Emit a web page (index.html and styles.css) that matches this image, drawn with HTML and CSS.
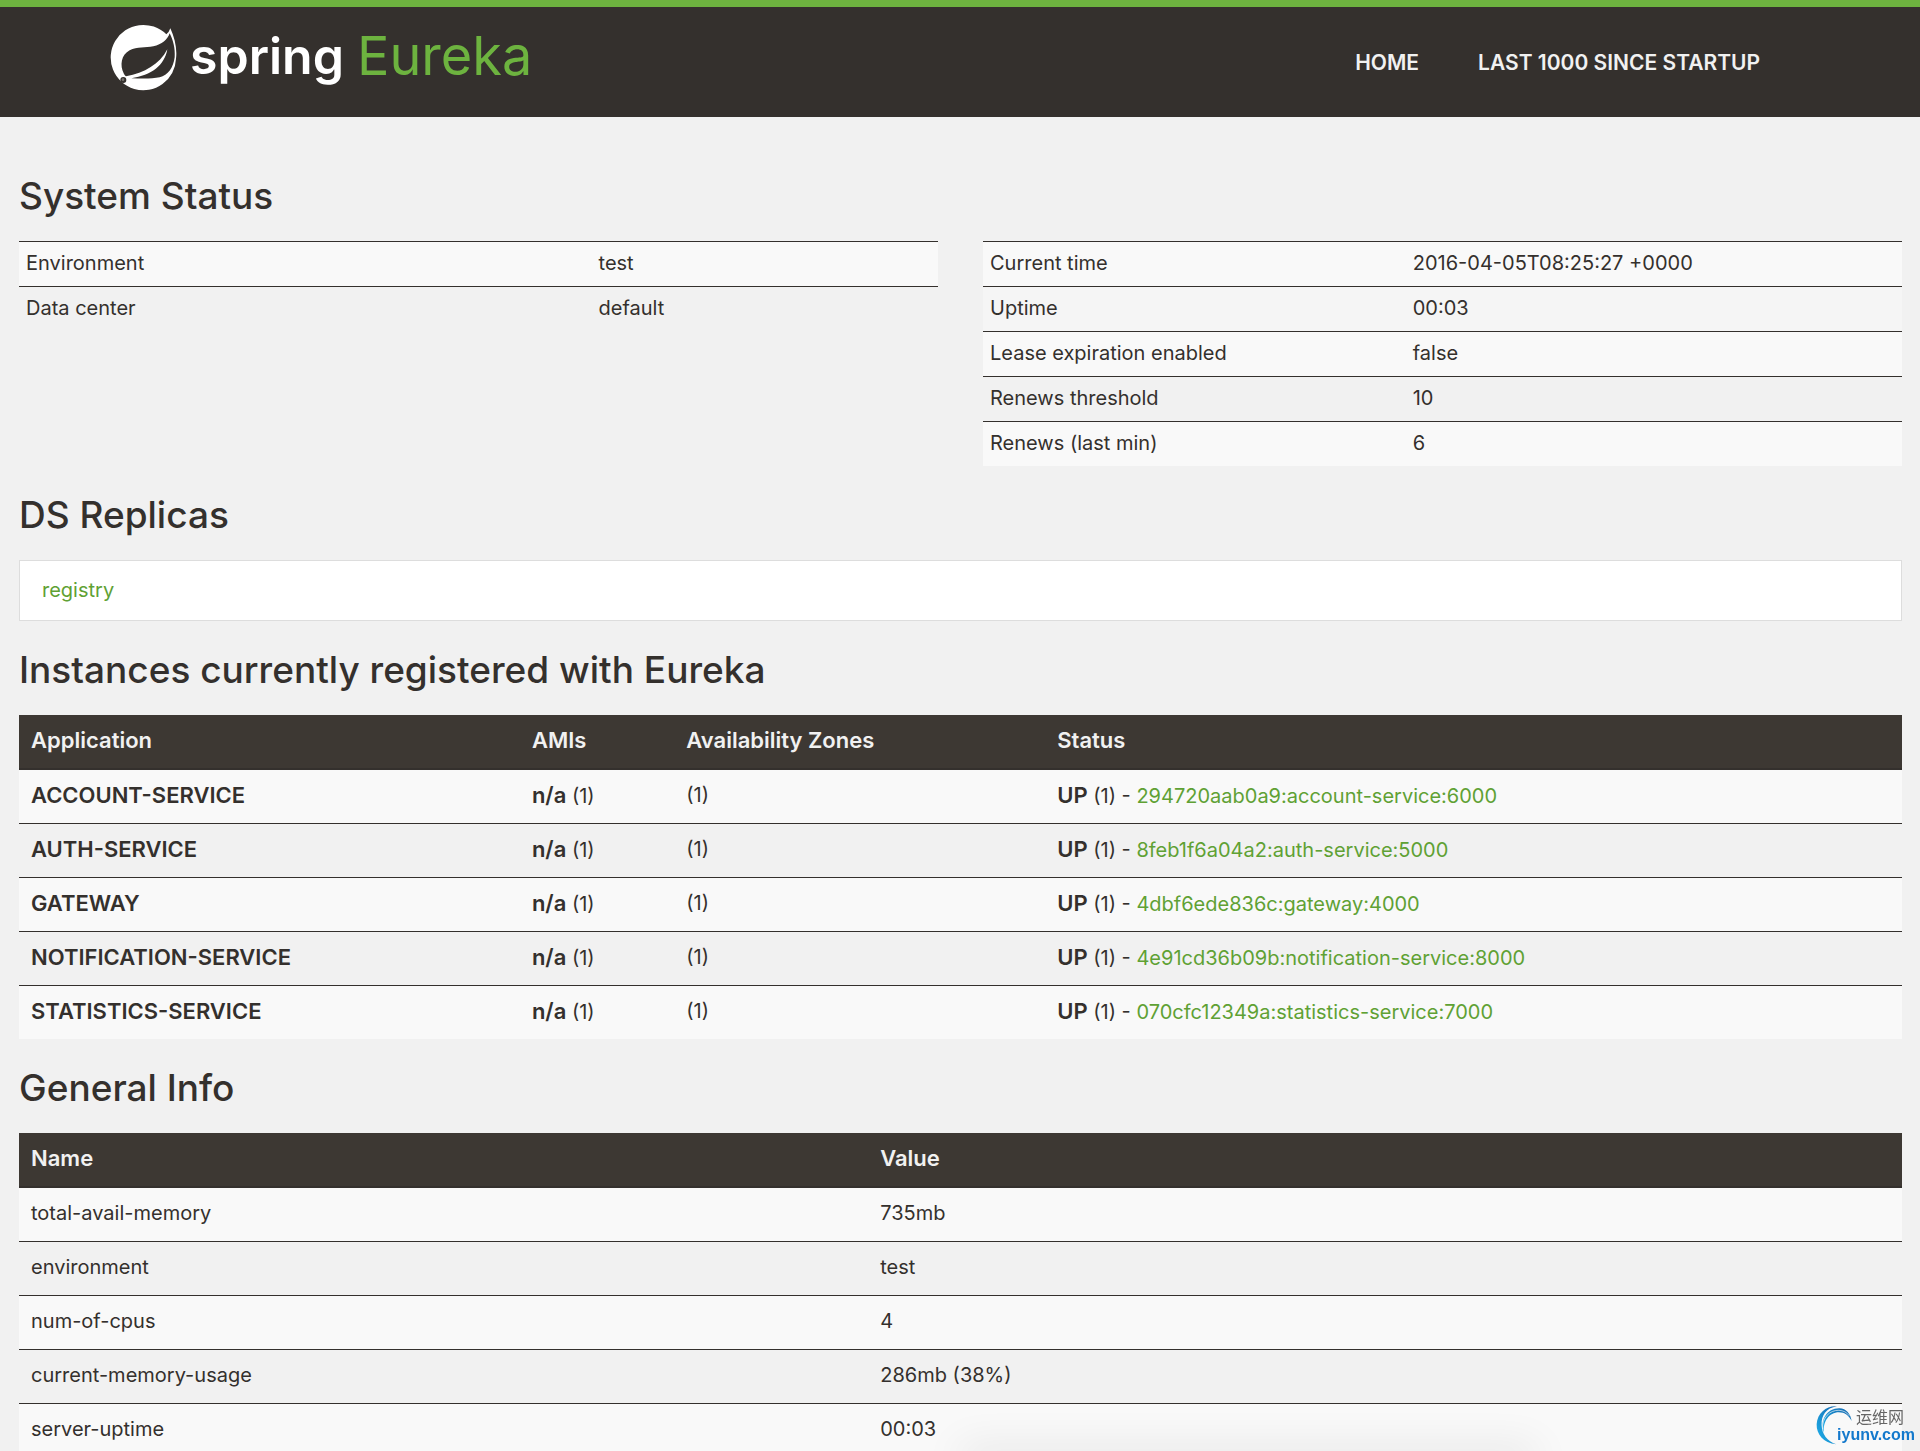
FILE: index.html
```
<!DOCTYPE html>
<html lang="en">
<head>
  <meta charset="UTF-8">
  <title>Eureka</title>
  <link rel="stylesheet" href="styles.css">
</head>
<body>

  <header class="navbar">
    <a class="brand" href="#">
      <svg class="brand-icon" viewBox="0 0 204 204" aria-hidden="true">
        <g transform="translate(-16 -26)">
          <path fill="#fff" d="M185 57A98 98 0 1 0 214 130C218 100 210 68 197 39Q193 51 185 57Z"/>
          <path fill="#34302d" d="M195 54C188 74 172 87 146 93C122 98 98 93 75 105C50 118 44 150 58 176Q61 181 64 183C120 172 164 148 188 102C180 150 140 180 80 189C112 190 142 191 165 186C190 180 206 158 210 126C212 100 206 76 195 54Z"/>
          <circle cx="56" cy="194" r="9" fill="#34302d"/>
          <circle cx="55" cy="193" r="4" fill="#77736f"/>
        </g>
      </svg>
      <span class="brand-spring">spring</span>
      <span class="brand-eureka">Eureka</span>
    </a>
    <nav class="nav-links">
      <a href="#">HOME</a>
      <a href="#lastn">LAST 1000 SINCE STARTUP</a>
    </nav>
  </header>

  <main class="container">
    <h1>System Status</h1>
    <div class="row">
      <table class="status-table status-left">
        <tr><td>Environment</td><td>test</td></tr>
        <tr><td>Data center</td><td>default</td></tr>
      </table>
      <table class="status-table status-right">
        <tr><td>Current time</td><td>2016-04-05T08:25:27 +0000</td></tr>
        <tr class="active"><td>Uptime</td><td>00:03</td></tr>
        <tr><td>Lease expiration enabled</td><td>false</td></tr>
        <tr><td>Renews threshold</td><td>10</td></tr>
        <tr><td>Renews (last min)</td><td>6</td></tr>
      </table>
    </div>

    <h1>DS Replicas</h1>
    <ul class="list-group">
      <li><a href="#">registry</a></li>
    </ul>

    <h1>Instances currently registered with Eureka</h1>
    <table class="data-table instances">
      <thead>
        <tr><th>Application</th><th>AMIs</th><th>Availability Zones</th><th>Status</th></tr>
      </thead>
      <tbody>
        <tr>
          <td><b>ACCOUNT-SERVICE</b></td>
          <td><b>n/a</b> (1)</td>
          <td>(1)</td>
          <td><b>UP</b> (1) - <a href="#">294720aab0a9:account-service:6000</a></td>
        </tr>
        <tr>
          <td><b>AUTH-SERVICE</b></td>
          <td><b>n/a</b> (1)</td>
          <td>(1)</td>
          <td><b>UP</b> (1) - <a href="#">8feb1f6a04a2:auth-service:5000</a></td>
        </tr>
        <tr>
          <td><b>GATEWAY</b></td>
          <td><b>n/a</b> (1)</td>
          <td>(1)</td>
          <td><b>UP</b> (1) - <a href="#">4dbf6ede836c:gateway:4000</a></td>
        </tr>
        <tr>
          <td><b>NOTIFICATION-SERVICE</b></td>
          <td><b>n/a</b> (1)</td>
          <td>(1)</td>
          <td><b>UP</b> (1) - <a href="#">4e91cd36b09b:notification-service:8000</a></td>
        </tr>
        <tr>
          <td><b>STATISTICS-SERVICE</b></td>
          <td><b>n/a</b> (1)</td>
          <td>(1)</td>
          <td><b>UP</b> (1) - <a href="#">070cfc12349a:statistics-service:7000</a></td>
        </tr>
      </tbody>
    </table>

    <h1>General Info</h1>
    <table class="data-table general">
      <thead>
        <tr><th>Name</th><th>Value</th></tr>
      </thead>
      <tbody>
        <tr><td>total-avail-memory</td><td>735mb</td></tr>
        <tr><td>environment</td><td>test</td></tr>
        <tr><td>num-of-cpus</td><td>4</td></tr>
        <tr><td>current-memory-usage</td><td>286mb (38%)</td></tr>
        <tr><td>server-uptime</td><td>00:03</td></tr>
      </tbody>
    </table>
  </main>

  <div class="bottom-shadow"></div>

  <div class="watermark">
    <svg class="watermark-icon" viewBox="0 0 110 126" aria-hidden="true">
      <defs>
        <linearGradient id="swoosh" x1="0" y1="1" x2="1" y2="0">
          <stop offset="0" stop-color="#1fb4ee"/>
          <stop offset="1" stop-color="#1464ac"/>
        </linearGradient>
      </defs>
      <path fill="url(#swoosh)" d="M62 119C22 116 1 88 2 58C4 22 34 0 64 3C30 8 16 32 17 60C18 88 34 110 62 119Z"/>
      <path fill="url(#swoosh)" d="M24 84C10 46 34 8 72 9C92 10 106 26 109 48C100 30 88 21 70 21C40 21 20 50 24 84Z"/>
      <path fill="none" stroke="#f9f9f9" stroke-width="2" d="M20 72C18 38 42 14 70 15C84 16 94 21 102 32"/>
    </svg>
    <div class="watermark-text">
      <span class="watermark-name">运维网</span>
      <span class="watermark-site">iyunv.com</span>
    </div>
  </div>

</body>
</html>
```
FILE: styles.css
```
* {
  box-sizing: border-box;
}

body {
  margin: 0;
  background: #f1f1f1;
  color: #34302d;
  font-family: Inter, "Noto Sans CJK SC", sans-serif;
  font-size: 20px;
  line-height: 24px;
}

a {
  color: #5fa134;
  text-decoration: none;
}

/* header */
.navbar {
  display: flex;
  justify-content: space-between;
  align-items: flex-start;
  padding: 17px 160px 25px 110px;
  background: #34302d;
  border-top: 7px solid #6db33f;
}

.brand {
  display: flex;
  align-items: flex-start;
  line-height: 64px;
}

.brand-icon {
  width: 68px;
  height: 68px;
}

.brand-spring {
  margin-left: 12px;
  color: #fff;
  font-size: 50px;
  font-weight: 600;
}

.brand-eureka {
  margin-left: 13px;
  color: #6db33f;
  font-size: 54px;
}

.nav-links {
  display: flex;
  gap: 59px;
  padding-top: 27px;
}

.nav-links a {
  color: #f1f1f1;
  font-size: 21px;
  font-weight: 600;
}

/* page */
.container {
  padding: 30px 18px 0 19px;
}

h1 {
  margin: 29px 0 25px;
  font-size: 37px;
  font-weight: 500;
  line-height: 40px;
}

.row {
  display: flex;
  align-items: flex-start;
  gap: 45px;
}

table {
  width: 100%;
  border-spacing: 0;
  table-layout: fixed;
}

th,
td {
  text-align: left;
  vertical-align: top;
}

.status-table {
  flex: 1;
}

.status-table td {
  padding: 9px 7px 11px;
  border-top: 1px solid #34302d;
}

.status-table tr:nth-child(odd) {
  background: #f9f9f9;
}

.status-table .active {
  background: #f5f5f5;
}

.status-left td:first-child {
  width: 62.3%;
}

.status-right td:first-child {
  width: 46%;
}

.list-group {
  margin: 0;
  padding: 0;
  list-style: none;
}

.list-group li {
  padding: 17px 22px 18px;
  background: #fff;
  border: 1px solid #ddd;
}

.data-table th {
  height: 55px;
  padding: 13px 12px;
  background: #3d3833;
  border-bottom: 2px solid #34302d;
  color: #f1f1f1;
  font-size: 22px;
  font-weight: 600;
}

.data-table td {
  height: 54px;
  padding: 13px 12px;
  border-bottom: 1px solid #34302d;
}

.data-table tbody tr:nth-child(odd) td {
  background: #f9f9f9;
}

.data-table tbody tr:last-child td {
  height: 53px;
  border-bottom: 0;
}

.data-table b {
  font-size: 22px;
  font-weight: 600;
}

.instances th:nth-child(1) {
  width: 26.6%;
}

.instances th:nth-child(2) {
  width: 8.2%;
}

.instances th:nth-child(3) {
  width: 19.7%;
}

.general th:first-child {
  width: 45.1%;
}

/* soft shade over the lower edge of the window */
.bottom-shadow {
  position: fixed;
  bottom: -12px;
  left: 50%;
  width: 30%;
  height: 12px;
  box-shadow: 0 0 40px rgba(0, 0, 0, 0.16);
}

.watermark {
  position: fixed;
  right: 5px;
  bottom: 4px;
  display: flex;
}

.watermark-icon {
  width: 36px;
  height: 42px;
}

.watermark-text {
  display: flex;
  flex-direction: column;
  align-items: flex-end;
  margin-left: -15px;
}

.watermark-name {
  padding-right: 11px;
  color: #666;
  font-family: "Noto Sans CJK SC", sans-serif;
  font-size: 16px;
  line-height: 22px;
}

.watermark-site {
  color: #1479cc;
  font-family: "Liberation Sans", sans-serif;
  font-size: 16px;
  font-weight: 700;
  line-height: 16px;
}
```
